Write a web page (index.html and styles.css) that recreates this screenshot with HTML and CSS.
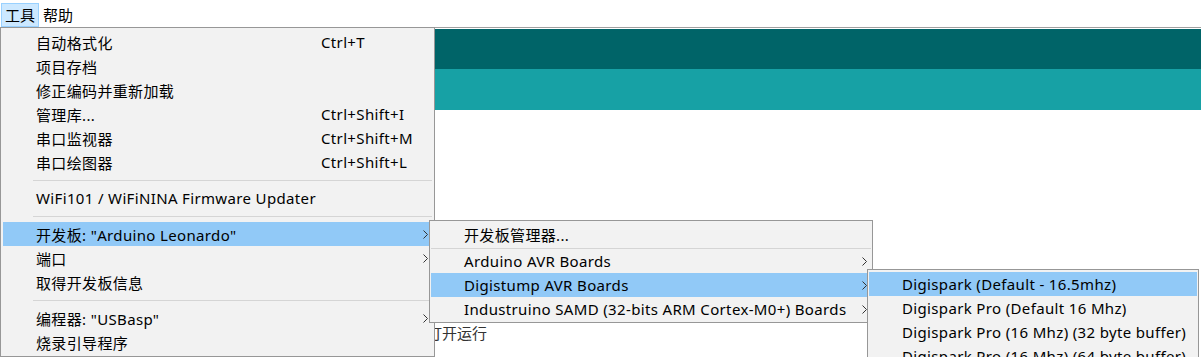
FILE: index.html
```html
<!DOCTYPE html>
<html lang="zh-CN">
<head>
  <meta charset="UTF-8" />
  <title>Arduino - 工具</title>
  <link rel="stylesheet" href="styles.css">
</head>
<body>

  <div class="menubar">
    <span class="menubar-item open">工具</span>
    <span class="menubar-item">帮助</span>
  </div>

  <div class="editor">
    <div class="bar-dark"></div>
    <div class="bar-light"></div>
    <div class="console">打开运行</div>
  </div>

  <!-- 工具 menu -->
  <div class="menu menu-tools">
    <div class="item"><span>自动格式化</span><span class="key">Ctrl+T</span></div>
    <div class="item"><span>项目存档</span></div>
    <div class="item"><span>修正编码并重新加载</span></div>
    <div class="item"><span>管理库...</span><span class="key">Ctrl+Shift+I</span></div>
    <div class="item"><span>串口监视器</span><span class="key">Ctrl+Shift+M</span></div>
    <div class="item"><span>串口绘图器</span><span class="key">Ctrl+Shift+L</span></div>
    <div class="sep"></div>
    <div class="item"><span>WiFi101 / WiFiNINA Firmware Updater</span></div>
    <div class="sep"></div>
    <div class="item active"><span>开发板: "Arduino Leonardo"</span><span class="key"></span><svg class="arrow" viewBox="0 0 5 9"><polyline points="0.5,0.5 4.5,4.5 0.5,8.5"/></svg></div>
    <div class="item"><span>端口</span><span class="key"></span><svg class="arrow" viewBox="0 0 5 9"><polyline points="0.5,0.5 4.5,4.5 0.5,8.5"/></svg></div>
    <div class="item"><span>取得开发板信息</span></div>
    <div class="sep"></div>
    <div class="item"><span>编程器: "USBasp"</span><span class="key"></span><svg class="arrow" viewBox="0 0 5 9"><polyline points="0.5,0.5 4.5,4.5 0.5,8.5"/></svg></div>
    <div class="item"><span>烧录引导程序</span></div>
  </div>

  <!-- 开发板 submenu -->
  <div class="menu menu-boards">
    <div class="item"><span>开发板管理器...</span></div>
    <div class="sep thin"></div>
    <div class="item"><span>Arduino AVR Boards</span><svg class="arrow" viewBox="0 0 5 9"><polyline points="0.5,0.5 4.5,4.5 0.5,8.5"/></svg></div>
    <div class="item active"><span>Digistump AVR Boards</span><svg class="arrow" viewBox="0 0 5 9"><polyline points="0.5,0.5 4.5,4.5 0.5,8.5"/></svg></div>
    <div class="item"><span>Industruino SAMD (32-bits ARM Cortex-M0+) Boards</span><svg class="arrow" viewBox="0 0 5 9"><polyline points="0.5,0.5 4.5,4.5 0.5,8.5"/></svg></div>
  </div>

  <!-- Digistump submenu -->
  <div class="menu menu-digi">
    <div class="item active"><span>Digispark (Default - 16.5mhz)</span></div>
    <div class="item"><span>Digispark Pro (Default 16 Mhz)</span></div>
    <div class="item"><span>Digispark Pro (16 Mhz) (32 byte buffer)</span></div>
    <div class="item"><span>Digispark Pro (16 Mhz) (64 byte buffer)</span></div>
  </div>

</body>
</html>
```

FILE: styles.css
```css
:root {
  --menu-bg:    #f2f2f2;
  --menu-line:  #979797;
  --sep:        #d5d5d5;
  --hover:      #91c9f7;
  --teal-dark:  #006468;
  --teal-light: #17a1a5;
}

* {
  box-sizing: border-box;
  margin: 0;
  padding: 0;
}

body {
  font-family: "Noto Sans", "Noto Sans CJK SC", sans-serif;
  font-size: 15px;
  color: #000;
  background: #fff;
  width: 1201px;
  height: 357px;
  overflow: hidden;
  position: relative;
}

.menubar {
  display: flex;
  height: 28px;
  padding: 3px 0 0 1px;
  border-bottom: 1px solid #a0a0a0;
}

.menubar-item {
  width: 38px;
  height: 24px;
  line-height: 22px;
  text-align: center;
  border: 1px solid transparent;
}

.menubar-item.open {
  background: #cce8ff;
  border-color: #99d1ff;
}

.editor {
  margin-top: 1px;
}

.bar-dark {
  height: 40px;
  background: var(--teal-dark);
}

.bar-light {
  height: 41px;
  background: var(--teal-light);
}

.console {
  padding: 211px 0 0 427px;
  line-height: 24px;
  color: #333;
}

/* popup menus */
.menu {
  position: absolute;
  background: var(--menu-bg);
  border: 1px solid var(--menu-line);
  letter-spacing: 0.35px;
}

.item {
  display: grid;
  grid-template-columns: 1fr auto;
  align-items: center;
  height: 24px;
  padding-left: 33px;
  white-space: nowrap;
}

.item.active {
  background: var(--hover);
}

.arrow {
  width: 5px;
  height: 9px;
  fill: none;
  stroke: #333;
  stroke-width: 1;
}

.sep {
  height: 12px;
  margin-left: 30px;
  display: flex;
  align-items: center;
}

.sep::after {
  content: "";
  flex: 1;
  border-top: 1px solid var(--sep);
}

.menu-tools {
  left: 0;
  top: 27px;
  width: 435px;
  padding: 2px;
}

.menu-tools .item {
  grid-template-columns: 285px 1fr 5px;
  padding-right: 4px;
}

.menu-boards {
  left: 429px;
  top: 220px;
  width: 444px;
  padding: 1px;
}

.menu-boards .item {
  padding-right: 4px;
}

.menu-boards .sep.thin {
  height: 3px;
  margin-left: 0;
  align-items: flex-end;
}

.menu-digi {
  left: 867px;
  top: 269px;
  width: 332px;
  padding: 2px 1px;
}
```
